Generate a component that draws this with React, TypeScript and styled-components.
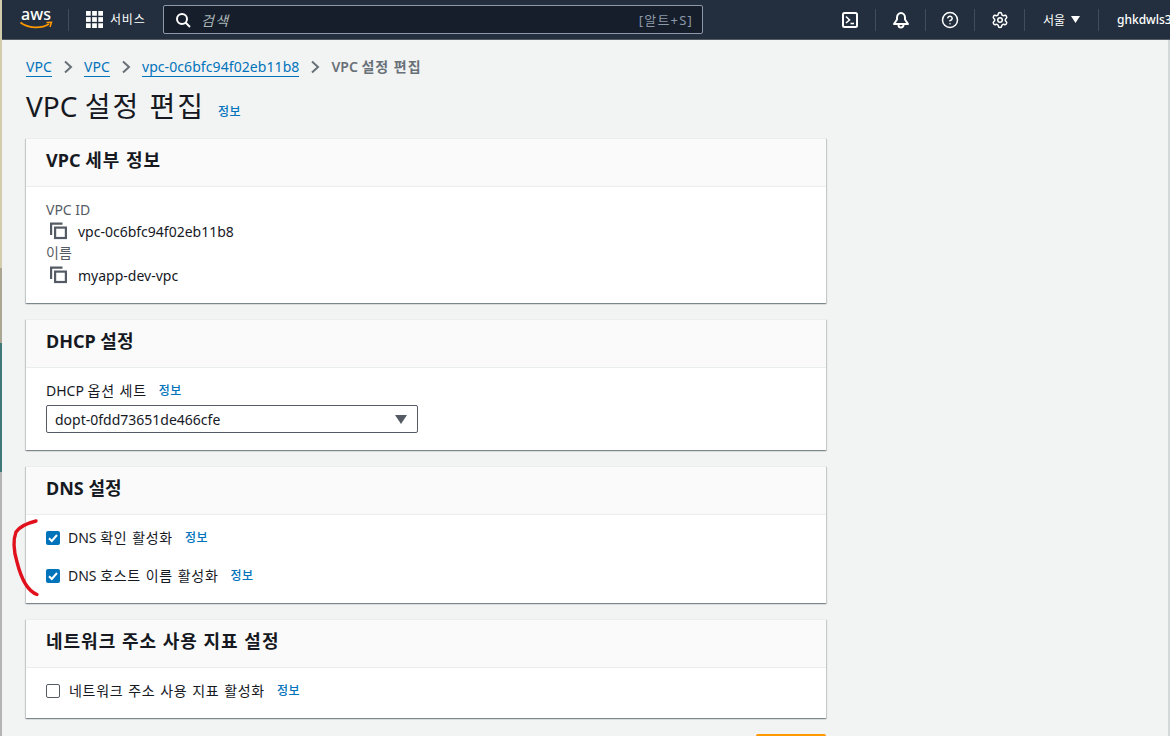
import React from 'react';
import styled, { createGlobalStyle } from 'styled-components';
import { Settings, CircleHelp } from 'lucide-react';

const Global = createGlobalStyle`
  html, body { margin: 0; padding: 0; height: 100%; overflow: hidden; background: #f2f3f3; }
  body { font-family: "Noto Sans", "Noto Sans CJK KR", sans-serif; font-size: 14px; color: #16191f; }
  * { box-sizing: border-box; }
`;

const Page = styled.div`
  position: relative;
  width: 1170px;
  height: 736px;
  overflow: hidden;
  padding-left: 2px;
  background:
    linear-gradient(to bottom, #d3ccaa 0 268px, #aaa692 268px 343px, #3f7a78 343px 472px, #b4b4b4 472px) left top / 2px 100% no-repeat,
    linear-gradient(#d5d8d8, #d5d8d8) right top / 2px 100% no-repeat,
    #f2f3f3;
`;

const TopBar = styled.header`
  height: 40px;
  background: #232f3e;
  border-bottom: 1px solid #545b64;
  display: flex;
  align-items: center;
  color: #fff;
  white-space: nowrap;
  overflow: hidden;
`;

const Logo = styled.div`
  width: 34px;
  height: 24px;
  margin-left: 18px;
  margin-top: -2px;
  display: flex;
  flex: none;
`;

const Sep = styled.span<{ $ml?: number }>`
  width: 1px;
  height: 22px;
  background: #414d5c;
  margin-left: ${p => p.$ml ?? 0}px;
  flex: none;
`;

const Services = styled.div`
  display: flex;
  align-items: center;
  gap: 7px;
  margin-left: 17px;
  font-size: 12px;
  line-height: 16px;
  width: 77px;
  flex: none;
  letter-spacing: 0.8px;
`;

const Search = styled.div`
  width: 540px;
  height: 29px;
  flex: none;
  background: #161e2b;
  border: 1px solid #8d99a8;
  border-radius: 2px;
  display: flex;
  align-items: center;
  padding: 0 9px 0 11px;
  font-size: 14px;
`;

const Placeholder = styled.span`
  font-style: italic;
  color: #aab7b8;
  margin-left: 10px;
  flex: 1;
  letter-spacing: 1.4px;
`;

const Shortcut = styled.span`
  color: #8d99a8;
  font-size: 13px;
  letter-spacing: 1.2px;
`;

const TopIcon = styled.div<{ $w: number; $ml?: number }>`
  width: ${p => p.$w}px;
  margin-left: ${p => p.$ml ?? 0}px;
  flex: none;
  display: flex;
  justify-content: center;
`;

const Region = styled.div`
  width: 73px;
  flex: none;
  font-size: 12px;
  display: flex;
  justify-content: center;
  align-items: center;
  gap: 6px;
`;

const User = styled.div`
  margin-left: 18px;
  flex: none;
  font-size: 12px;
  font-weight: 500;
`;

const Content = styled.main`
  padding: 17px 0 0 24px;
  width: 824px;
`;

const Crumbs = styled.nav`
  display: flex;
  align-items: center;
  height: 20px;
  font-size: 14px;
  line-height: 20px;
  white-space: pre;
`;

const Crumb = styled.a`
  color: #0073bb;
  border-bottom: 1px solid #0073bb;
  line-height: 19px;
  height: 20px;
  letter-spacing: 0.08px;
`;

const CrumbSep = styled.span`
  width: 32px;
  flex: none;
  display: flex;
  justify-content: center;
`;

const Current = styled.span`
  color: #687078;
  font-weight: 600;
`;

const CurrentKo = styled.span`
  letter-spacing: 1px;
`;

const Ko = styled.span`
  letter-spacing: 0.7px;
  word-spacing: 0.5px;
`;

const HeadKo = styled.span`
  letter-spacing: 1px;
`;

const TitleKo = styled.span`
  letter-spacing: 2px;
`;

const TitleRow = styled.div`
  display: flex;
  align-items: flex-end;
  margin-top: 8px;
  height: 42px;
`;

const Title = styled.h1`
  margin: 0;
  font-size: 28px;
  line-height: 42px;
  font-weight: 400;
  white-space: pre;
`;

const Info = styled.a<{ $ml?: number }>`
  color: #0073bb;
  font-size: 12px;
  font-weight: 500;
  letter-spacing: 0.5px;
  margin-left: ${p => p.$ml ?? 12}px;
`;

const TitleInfo = styled(Info)`
  line-height: 20px;
  margin-bottom: 5px;
`;

const Cards = styled.div`
  margin-top: 11px;
  display: flex;
  flex-direction: column;
  gap: 16px;
`;

const Card = styled.section<{ $h: number }>`
  width: 800px;
  height: ${p => p.$h}px;
  background: #fff;
  box-shadow: 0 1px 1px 0 rgba(0, 28, 36, 0.3), 1px 1px 1px 0 rgba(0, 28, 36, 0.15), -1px 1px 1px 0 rgba(0, 28, 36, 0.15);
  border-top: 1px solid #eaeded;
`;

const CardHead = styled.div`
  height: 48px;
  background: #fafafa;
  border-bottom: 1px solid #eaeded;
  padding: 0 20px 6px;
  display: flex;
  align-items: center;
  font-size: 18px;
  font-weight: 700;
  line-height: 22px;
  white-space: pre;
`;

const CardBody = styled.div<{ $pt?: number }>`
  padding: ${p => p.$pt ?? 13}px 20px 0;
`;

const Fields = styled.div`
  display: grid;
  grid-template-rows: 21px 22px 22px 22px;
`;

const Label = styled.div`
  color: #545b64;
  line-height: 22px;
  height: 22px;
  font-size: 14px;
`;

const Value = styled.div`
  display: flex;
  align-items: center;
  height: 22px;
  gap: 10px;
  padding-left: 4px;
  color: #16191f;
  font-size: 14px;
  & > svg { flex: none; }
`;

const FieldLabel = styled.div`
  display: flex;
  align-items: center;
  height: 20px;
  line-height: 20px;
  white-space: pre;
`;

const Select = styled.div`
  margin-top: 4px;
  width: 372px;
  height: 28px;
  border: 1px solid #545b64;
  border-radius: 2px;
  display: flex;
  align-items: center;
  justify-content: space-between;
  padding: 0 10px 0 8px;
  background: #fff;
  font-size: 14px;
`;

const CheckRow = styled.label<{ $mt?: number }>`
  display: flex;
  align-items: center;
  height: 20px;
  margin-top: ${p => p.$mt ?? 0}px;
  line-height: 20px;
  white-space: pre;
`;

const Check = styled.span<{ $on?: boolean }>`
  width: 14px;
  height: 14px;
  border-radius: 2px;
  flex: none;
  margin-right: ${p => (p.$on ? 8 : 9)}px;
  display: flex;
  align-items: center;
  justify-content: center;
  background: ${p => (p.$on ? '#0073bb' : '#fff')};
  border: ${p => (p.$on ? 'none' : '1px solid #545b64')};
`;

const Scribble = styled.svg`
  position: absolute;
  left: 0;
  top: 0;
  pointer-events: none;
`;

const Submit = styled.div`
  position: absolute;
  left: 756px;
  top: 734px;
  width: 70px;
  height: 30px;
  border-radius: 2px;
  background: #ff9900;
`;

const Chevron = () => (
  <svg width="10" height="14" viewBox="0 0 10 14" fill="none" stroke="#687078" strokeWidth="2">
    <path d="M2 1.5 L8 7 L2 12.5" />
  </svg>
);

const Copy = () => (
  <svg width="18" height="18" viewBox="0 0 18 18" fill="none" stroke="#545b64" strokeWidth="2.2">
    <path d="M1.1 13V1.6h11.4" />
    <rect x="5.1" y="5.6" width="10.8" height="10.4" />
  </svg>
);

const Tick = () => (
  <svg width="12" height="12" viewBox="0 0 12 12" fill="none" stroke="#fff" strokeWidth="2">
    <path d="M2 6.2 L4.8 9 L10 3" />
  </svg>
);

export default function App() {
  return (
    <Page>
      <Global />
      <TopBar>
        <Logo>
          <svg width="34" height="24" viewBox="0 0 34 24" overflow="visible">
            <text x="1" y="13" fill="#fff" fontSize="16" fontWeight="500" fontFamily="Noto Sans" textLength="30">aws</text>
            <path d="M0.5 15.5 C8 21.5 21 22 29 17" fill="none" stroke="#ff9900" strokeWidth="1.7" />
            <path d="M26.5 15.5 L31.5 15.2 L30 20" fill="none" stroke="#ff9900" strokeWidth="1.5" />
          </svg>
        </Logo>
        <Sep $ml={14} />
        <Services>
          <svg width="17" height="17" viewBox="0 0 18 18" fill="#fff">
            {[0, 6.5, 13].flatMap(x => [0, 6.5, 13].map(y => <rect key={`${x}-${y}`} x={x} y={y} width="5" height="5" />))}
          </svg>
          <span>서비스</span>
        </Services>
        <Search>
          <svg width="16" height="16" viewBox="0 0 16 16" fill="none" stroke="#fff" strokeWidth="2">
            <circle cx="7" cy="7" r="5" />
            <path d="M10.5 10.5 L15 15" />
          </svg>
          <Placeholder>검색</Placeholder>
          <Shortcut>[알트+S]</Shortcut>
        </Search>
        <TopIcon $w={50} $ml={122}>
          <svg width="16" height="16" viewBox="0 0 16 16" fill="none" stroke="#fff" strokeWidth="2">
            <rect x="1" y="1" width="14" height="14" rx="1.5" />
            <path d="M4 4.5 L7.5 8 L4 11" strokeWidth="1.6" />
            <path d="M8.5 11.5 H12" strokeWidth="1.6" />
          </svg>
        </TopIcon>
        <Sep />
        <TopIcon $w={49}>
          <svg width="16" height="18" viewBox="0 0 16 18" fill="none" stroke="#fff" strokeWidth="2">
            <path d="M1 13 H15 L12 8.5 V6.5 A4 4.5 0 0 0 4 6.5 V8.5 Z" strokeLinejoin="round" />
            <path d="M5.5 14 A2.5 2.5 0 0 0 10.5 14" />
          </svg>
        </TopIcon>
        <Sep />
        <TopIcon $w={48}>
          <CircleHelp size={18} color="#fff" strokeWidth={2} />
        </TopIcon>
        <Sep />
        <TopIcon $w={49}>
          <Settings size={18} color="#fff" strokeWidth={2} />
        </TopIcon>
        <Sep />
        <Region>
          <span>서울</span>
          <svg width="9" height="7" viewBox="0 0 9 7" fill="#fff"><path d="M0 0 H9 L4.5 7 Z" /></svg>
        </Region>
        <Sep />
        <User>ghkdwls30</User>
      </TopBar>
      <Content>
        <Crumbs>
          <Crumb>VPC</Crumb>
          <CrumbSep><Chevron /></CrumbSep>
          <Crumb>VPC</Crumb>
          <CrumbSep><Chevron /></CrumbSep>
          <Crumb>vpc-0c6bfc94f02eb11b8</Crumb>
          <CrumbSep><Chevron /></CrumbSep>
          <Current>VPC <CurrentKo>설정 편집</CurrentKo></Current>
        </Crumbs>
        <TitleRow>
          <Title>VPC <TitleKo>설정 편집</TitleKo></Title>
          <TitleInfo $ml={13}>정보</TitleInfo>
        </TitleRow>
        <Cards>
          <Card $h={165}>
            <CardHead>VPC <HeadKo>세부 정보</HeadKo></CardHead>
            <CardBody $pt={12}>
              <Fields>
                <Label>VPC ID</Label>
                <Value><Copy />vpc-0c6bfc94f02eb11b8</Value>
                <Label>이름</Label>
                <Value><Copy />myapp-dev-vpc</Value>
              </Fields>
            </CardBody>
          </Card>
          <Card $h={131}>
            <CardHead>DHCP 설정</CardHead>
            <CardBody>
              <FieldLabel>DHCP <Ko>옵션 세트</Ko><Info>정보</Info></FieldLabel>
              <Select>
                dopt-0fdd73651de466cfe
                <svg width="12" height="9" viewBox="0 0 12 9" fill="#545b64"><path d="M0 0 H12 L6 9 Z" /></svg>
              </Select>
            </CardBody>
          </Card>
          <Card $h={137}>
            <CardHead>DNS 설정</CardHead>
            <CardBody>
              <CheckRow><Check $on><Tick /></Check>DNS <Ko>확인 활성화</Ko><Info>정보</Info></CheckRow>
              <CheckRow $mt={18}><Check $on><Tick /></Check>DNS <Ko>호스트 이름 활성화</Ko><Info>정보</Info></CheckRow>
            </CardBody>
          </Card>
          <Card $h={99}>
            <CardHead><HeadKo>네트워크 주소 사용 지표 설정</HeadKo></CardHead>
            <CardBody>
              <CheckRow><Check /><Ko>네트워크 주소 사용 지표 활성화</Ko><Info>정보</Info></CheckRow>
            </CardBody>
          </Card>
        </Cards>
      </Content>
      <Submit />
      <Scribble width="60" height="736" viewBox="0 0 60 736" fill="none">
        <path d="M36 521 C28 523 20 526 16 532 C13 540 14 552 17 562 C20 574 25 590 37 594.5" stroke="#e0101c" strokeWidth="3.4" strokeLinecap="round" />
      </Scribble>
    </Page>
  );
}
